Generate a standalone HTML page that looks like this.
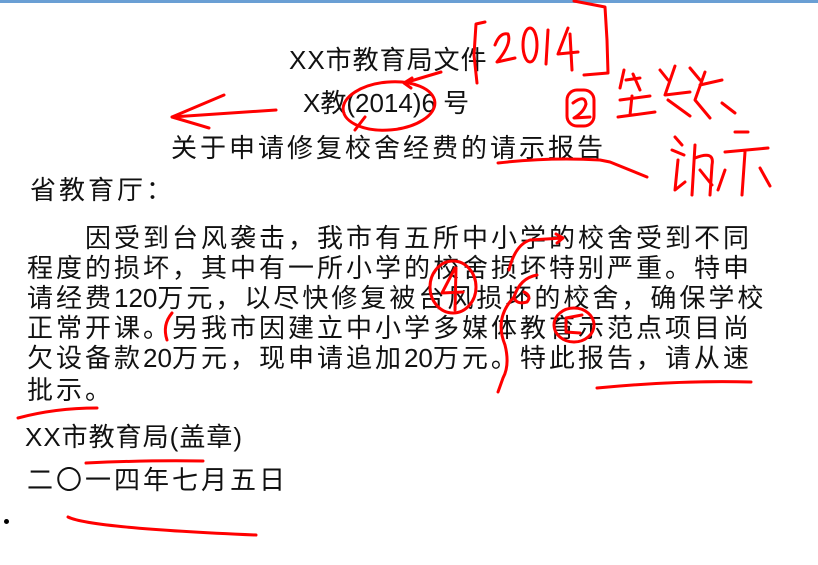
<!DOCTYPE html>
<html><head><meta charset="utf-8"><style>
html,body{margin:0;padding:0;background:#fff;}
body{width:818px;height:565px;position:relative;overflow:hidden;font-family:"Liberation Sans","Noto Sans CJK SC",sans-serif;color:#111;}
.t{position:absolute;font-size:26px;letter-spacing:3px;white-space:nowrap;line-height:30px;}
.n{letter-spacing:0}
svg{position:absolute;left:0;top:0;}
</style></head><body>
<div style="position:absolute;left:0;top:0;width:818px;height:3px;background:#6a9fd4"></div>
<div class="t" style="left:289px;top:45px;letter-spacing:1px">XX市教育局文件</div>
<div class="t" style="left:303px;top:88px;letter-spacing:0">X教(2014)6 号</div>
<div class="t" style="left:171px;top:133px">关于申请修复校舍经费的请示报告</div>
<div class="t" style="left:30px;top:175px">省教育厅：</div>
<div class="t" style="left:27px;top:223px;text-indent:58px">因受到台风袭击，我市有五所中小学的校舍受到不同</div>
<div class="t" style="left:27px;top:253px">程度的损坏，其中有一所小学的校舍损坏特别严重。特申</div>
<div class="t" style="left:27px;top:283px">请经费<span class="n">120</span>万元，以尽快修复被台风损坏的校舍，确保学校</div>
<div class="t" style="left:27px;top:313px">正常开课。另我市因建立中小学多媒体教育示范点项目尚</div>
<div class="t" style="left:27px;top:343px">欠设备款<span class="n">20</span>万元，现申请追加<span class="n">20</span>万元。特此报告，请从速</div>
<div class="t" style="left:27px;top:375px">批示。</div>
<div class="t" style="left:25px;top:422px;letter-spacing:1px">XX市教育局(盖章)</div>
<div class="t" style="left:27px;top:465px">二〇一四年七月五日</div>
<div style="position:absolute;left:4px;top:519px;width:5px;height:5px;border-radius:50%;background:#000"></div>
<svg width="818" height="565" fill="none" stroke="#f00" stroke-width="3" stroke-linecap="round" stroke-linejoin="round">
<!-- left arrow -->
<path d="M276 110 L172 117 M224 95 L172 117 L209 128"/>
<!-- circle around (2014)6 -->
<ellipse cx="389" cy="106" rx="46" ry="24" transform="rotate(-5 389 106)"/>
<path d="M365 117 L355 130"/>
<!-- arrow to circle -->
<path d="M441 72 L404 83 M412 78 L404 83 L411 88"/>
<!-- [2014] -->
<path d="M485 22 L476 24 L474 55 L477 83"/>
<path d="M495 45 Q500 32 508 34 Q512 44 497 62 L515 58"/>
<ellipse cx="530" cy="45" rx="7" ry="17"/>
<path d="M548 30 L546 64"/>
<path d="M568 28 L558 54 L578 52 M570 34 L572 70"/>
<path d="M574 1 L605 7 L607 40 L608 73 L584 75"/>
<!-- circled 2 -->
<rect x="567" y="90" width="27" height="36" rx="10"/>
<path d="M573 103 Q585 94 586 104 Q584 112 574 118 L590 117"/>
<!-- 签数 -->
<path d="M624 70 L620 88 M626 80 L640 78 M633 74 L640 90 M620 100 L650 96 M632 96 L630 115 M618 117 L655 112 M660 70 L668 80 M675 66 L665 95 L690 92 M668 100 L690 116 M690 68 L700 80 M705 72 L695 100 L710 118 M700 85 L722 80"/>
<path d="M722 103 L735 113"/>
<!-- 请示 -->
<path d="M675 137 L682 145 M672 150 L684 155 M678 160 L675 190 L685 182 M695 145 L692 195 M695 158 Q715 150 712 165 L710 195 M700 170 L712 185 M735 132 L748 132 M725 152 L768 148 M745 152 L742 195 M725 170 L718 190 M760 168 L770 186"/>
<!-- underline 请示报告 -->
<path d="M498 163 Q550 157 600 160 L610 162 L647 177"/>
<!-- body annotations -->
<path d="M509 270 Q515 245 530 240 L563 238 M556 234 L563 238 L557 243"/>
<ellipse cx="453" cy="287" rx="23" ry="26"/>
<path d="M455 268 L442 293 L463 292 M456 268 L455 310"/>
<path d="M537 275 Q520 278 514 297 Q516 305 527 302 Q532 296 524 292"/>
<path d="M514 297 Q494 318 505 345 Q510 365 503 378 L498 392"/>
<ellipse cx="574" cy="325" rx="20" ry="17"/>
<path d="M566 318 L582 315 M566 320 L566 332 L580 333"/>
<path d="M172 313 Q162 325 167 340"/>
<path d="M597 388 Q680 380 751 382"/>
<path d="M18 418 Q55 408 97 408"/>
<path d="M86 463 Q150 460 203 461"/>
<path d="M68 517 Q90 528 256 535"/>
</svg>
</body></html>
